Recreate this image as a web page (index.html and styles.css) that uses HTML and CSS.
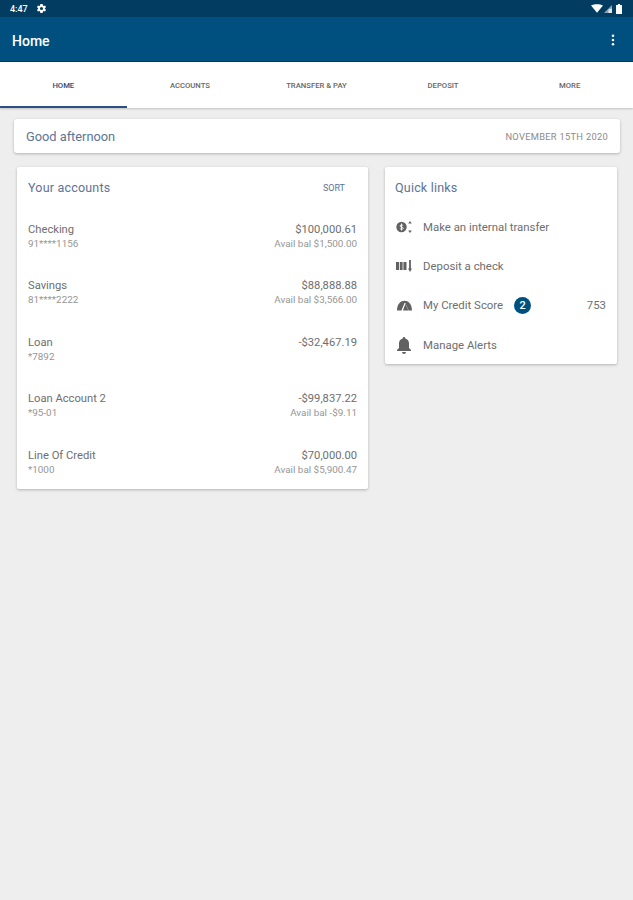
FILE: index.html
```html
<!DOCTYPE html>
<html lang="en">
<head>
    <meta charset="UTF-8">
    <meta name="viewport" content="width=device-width, initial-scale=1.0">
    <title>Home</title>
    <link rel="stylesheet" href="styles.css">
</head>
<body>
    <div class="status-bar">
        <div class="status-left">
            <span class="status-time">4:47</span>
            <svg class="status-gear" viewBox="0 0 24 24">
                <path d="M19.400 13a7.500 7.500 0 0 0 0-2l2.600-1.600-2.300-4-2.900 1a7.500 7.500 0 0 0-1.700-1L14.500 2h-5l-.6 3.400a7.500 7.500 0 0 0-1.700 1l-2.900-1-2.300 4L4.600 11a7.500 7.500 0 0 0 0 2L2 14.600l2.300 4 2.900-1c.5.400 1.100.7 1.700 1l.6 3.400h5l.6-3.400c.6-.3 1.200-.6 1.700-1l2.900 1 2.300-4zM12 15.500a3.500 3.500 0 1 1 0-7 3.500 3.500 0 0 1 0 7z" fill="currentColor" fill-rule="evenodd"/>
            </svg>
        </div>
        <div class="status-right">
            <svg class="status-wifi" viewBox="0 0 14 10"><path d="M0 1.500C3.800-.5 10.200-.5 14 1.500L7 10z" fill="currentColor"/></svg>
            <svg class="status-signal" viewBox="0 0 9 9"><path d="M9 0v9H0z" fill="#8fa5b5"/><path d="M9 4v5H5V5z" fill="#dfe6ea"/></svg>
            <svg class="status-battery" viewBox="0 0 6 10"><path d="M2 0h2v1h2v9H0V1h2z" fill="currentColor"/></svg>
        </div>
    </div>

    <div class="app-bar">
        <span class="app-title">Home</span>
        <svg class="app-menu" viewBox="0 0 4 14">
            <circle cx="2" cy="2" r="1.500" fill="currentColor"/>
            <circle cx="2" cy="7" r="1.500" fill="currentColor"/>
            <circle cx="2" cy="12" r="1.500" fill="currentColor"/>
        </svg>
    </div>

    <div class="tabs">
        <div class="tab tab-active">HOME</div>
        <div class="tab">ACCOUNTS</div>
        <div class="tab">TRANSFER &amp; PAY</div>
        <div class="tab">DEPOSIT</div>
        <div class="tab">MORE</div>
    </div>

    <div class="greeting">
        <span class="greeting-text">Good afternoon</span>
        <span class="greeting-date">NOVEMBER 15TH 2020</span>
    </div>

    <div class="columns">
        <div class="card accounts">
            <div class="card-head">
                <span class="card-title">Your accounts</span>
                <span class="sort">SORT</span>
            </div>
            <div class="account">
                <div class="account-line"><span>Checking</span><span>$100,000.61</span></div>
                <div class="account-sub"><span>91****1156</span><span>Avail bal $1,500.00</span></div>
            </div>
            <div class="account">
                <div class="account-line"><span>Savings</span><span>$88,888.88</span></div>
                <div class="account-sub"><span>81****2222</span><span>Avail bal $3,566.00</span></div>
            </div>
            <div class="account">
                <div class="account-line"><span>Loan</span><span>-$32,467.19</span></div>
                <div class="account-sub"><span>*7892</span></div>
            </div>
            <div class="account">
                <div class="account-line"><span>Loan Account 2</span><span>-$99,837.22</span></div>
                <div class="account-sub"><span>*95-01</span><span>Avail bal -$9.11</span></div>
            </div>
            <div class="account">
                <div class="account-line"><span>Line Of Credit</span><span>$70,000.00</span></div>
                <div class="account-sub"><span>*1000</span><span>Avail bal $5,900.47</span></div>
            </div>
        </div>

        <div class="card links">
            <div class="card-head">
                <span class="card-title">Quick links</span>
            </div>
            <div class="link">
                <svg class="link-icon" viewBox="0 0 18 18">
                    <circle cx="6.500" cy="9" r="5.200" fill="currentColor"/>
                    <path d="M8.200 7.600C7.800 6.800 5 6.700 5 8c0 1.500 3.300.8 3.300 2.300 0 1.300-2.900 1.200-3.400.3M6.500 5.500v7" stroke="#fff" stroke-width=".9" fill="none"/>
                    <path d="M15 3l1.800 2.500h-3.600zM13.200 12.500h3.600L15 15z" fill="currentColor"/>
                </svg>
                <span>Make an internal transfer</span>
            </div>
            <div class="link">
                <svg class="link-icon" viewBox="0 0 18 18">
                    <path d="M1 5h10.500v8H1z" fill="currentColor"/>
                    <path d="M4.500 5v8M8 5v8" stroke="#fff" stroke-width=".8"/>
                    <path d="M15 3v9" stroke="currentColor" stroke-width="1.800"/>
                    <path d="M13 11.500h4L15 15z" fill="currentColor"/>
                </svg>
                <span>Deposit a check</span>
            </div>
            <div class="link">
                <svg class="link-icon" viewBox="0 0 18 18">
                    <path d="M2 14.500C2 1.500 17 1.500 17 14.500h-3.300L10 6.800 6.700 14.500H2z" fill="currentColor"/>
                    <path d="M10.200 7.500l3.300 7H8z" fill="currentColor"/>
                    <path d="M7 14.500l3-7.500" stroke="#fff" stroke-width=".9"/>
                </svg>
                <span>My Credit Score</span>
                <span class="badge">2</span>
                <span class="score">753</span>
            </div>
            <div class="link">
                <svg class="link-icon" viewBox="0 0 18 18">
                    <path d="M9 1a1.300 1.300 0 0 1 1.300 1.400C12.700 3 14 5 14 7.500V12l2 2v1H2v-1l2-2V7.500C4 5 5.300 3 7.700 2.400A1.300 1.300 0 0 1 9 1zM7 16h4a2 2 0 0 1-4 0z" fill="currentColor"/>
                </svg>
                <span>Manage Alerts</span>
            </div>
        </div>
    </div>
</body>
</html>
```

FILE: styles.css
```css
body {
    margin: 0;
    min-height: 900px;
    background-color: #eeeeee;
    color: #6e6e6e;
    font-family: Roboto, sans-serif;
}

.status-bar {
    height: 17px;
    display: flex;
    justify-content: space-between;
    align-items: center;
    padding: 0 11px 0 10px;
    background-color: #023c60;
    color: #fff;
}

.status-left,
.status-right {
    display: flex;
    align-items: center;
}

.status-time {
    font-size: 9px;
    font-weight: 500;
}

.status-gear {
    width: 11px;
    height: 11px;
    margin-left: 8px;
}

.status-wifi {
    width: 12px;
    height: 9px;
}

.status-signal {
    width: 8px;
    height: 8px;
    margin-left: 1px;
}

.status-battery {
    width: 6px;
    height: 10px;
    margin-left: 4px;
}

.app-bar {
    height: 45px;
    display: flex;
    justify-content: space-between;
    align-items: center;
    padding: 3px 18px 0 12px;
    box-sizing: border-box;
    background-color: #00507f;
    border-bottom: 1px solid #003a6a;
    color: #fff;
}

.app-title {
    font-size: 14px;
    font-weight: 500;
}

.app-menu {
    width: 4px;
    height: 12px;
    margin-top: -1px;
}

.tabs {
    height: 46px;
    display: flex;
    background: white;
    box-shadow: 0 1px 2px rgba(0,0,0,0.2);
}

.tab {
    flex: 1;
    display: flex;
    justify-content: center;
    align-items: center;
    font-size: 7.700px;
    font-weight: 500;
    color: #666;
}

.tab-active {
    color: #2c4a75;
    box-shadow: inset 0 -2px 0 #2f4f80;
}

.greeting {
    height: 34px;
    margin: 11px 13px 14px 14px;
    padding: 0 12px;
    display: flex;
    justify-content: space-between;
    align-items: center;
    background: white;
    border-radius: 3px;
    box-shadow: 0 1px 3px rgba(0,0,0,0.25);
}

.greeting-text {
    font-size: 12.800px;
    color: #5d7397;
}

.greeting-date {
    font-size: 9.300px;
    color: #8a8a8a;
    letter-spacing: 0.3px;
}

.columns {
    display: flex;
    align-items: flex-start;
    gap: 17px;
    padding: 0 16px 0 17px;
}

.card {
    background: white;
    border-radius: 2px;
    box-shadow: 0 1px 3px rgba(0,0,0,0.25);
    box-sizing: border-box;
}

.accounts {
    width: 351px;
    height: 322px;
    padding: 0 11px;
}

.links {
    width: 232px;
    height: 197px;
    padding: 0 11px 0 10px;
}

.card-head {
    height: 41px;
    display: flex;
    justify-content: space-between;
    align-items: center;
}

.links .card-head {
    height: 40.400px;
    padding-top: 0.600px;
    box-sizing: border-box;
}

.card-title {
    font-size: 12.500px;
    color: #5d7397;
    letter-spacing: 0.2px;
}

.sort {
    margin-right: 12px;
    font-size: 9px;
    color: #5d7397;
}

.account {
    height: 56.500px;
    padding-top: 14.500px;
    box-sizing: border-box;
}

.account-line,
.account-sub {
    display: flex;
    justify-content: space-between;
}

.account-line {
    font-size: 11.200px;
    line-height: 14px;
    color: #6e6e6e;
}

.account-sub {
    font-size: 9.900px;
    line-height: 14px;
    color: #969696;
}

.link {
    height: 39.200px;
    display: flex;
    align-items: center;
    font-size: 11.400px;
}

.link-icon {
    width: 18px;
    height: 18px;
    margin-right: 10px;
    flex-shrink: 0;
    color: #616161;
}

.badge {
    width: 17px;
    height: 17px;
    margin-left: 11px;
    display: flex;
    justify-content: center;
    align-items: center;
    border-radius: 50%;
    background-color: #00507f;
    color: #fff;
    font-size: 11px;
    font-weight: 500;
}

.score {
    margin-left: auto;
}
```
